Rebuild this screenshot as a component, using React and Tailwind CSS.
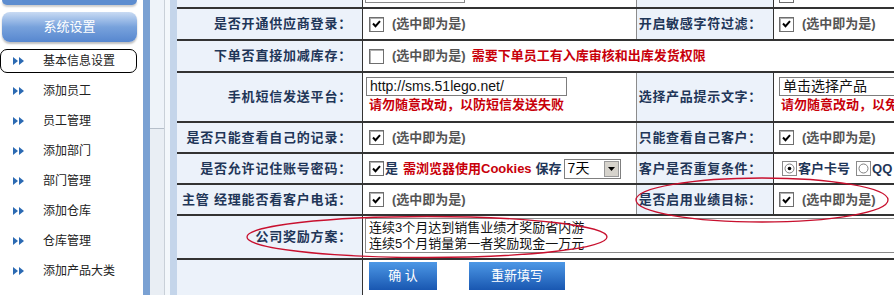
import React from "react";

const menu = ["基本信息设置", "添加员工", "员工管理", "添加部门", "部门管理", "添加仓库", "仓库管理", "添加产品大类"];

function Arrows() {
    return (
        <svg width="12" height="8" viewBox="0 0 12 8">
            <polygon points="0,0 5,4 0,8" fill="#2b6ab3" />
            <polygon points="6,0 11,4 6,8" fill="#2b6ab3" />
        </svg>
    );
}

function Sidebar() {
    return (
        <div className="flex w-[143px] shrink-0 flex-col bg-white">
            <div className="mx-[2px] h-[5px] w-[135px] rounded-b-[6px] bg-[#5d8dd0] shadow-[0_2px_2px_rgba(0,0,0,0.2)]" />
            <div className="mx-[2px] mt-[7px] flex h-[30px] w-[135px] items-center justify-center rounded-[8px] bg-linear-to-b from-[#c9dbf3] via-[#78a2dc] to-[#5787cf] text-[13px] text-white shadow-[0_2px_2px_rgba(0,0,0,0.25)]">
                系统设置
            </div>
            <div className="mt-[4px] flex flex-col">
                {menu.map((item, i) => (
                    <div key={item} className="h-[30px] py-[3px]">
                        <div className={i === 0
                            ? "flex h-full w-[137px] items-center rounded-[7px] border border-black pl-[12px]"
                            : "flex h-full w-[137px] items-center rounded-[7px] border border-transparent pl-[12px]"}>
                            <Arrows />
                            <span className="ml-[18px] text-[12px] text-[#222]">{item}</span>
                        </div>
                    </div>
                ))}
            </div>
        </div>
    );
}

function Check({ checked }) {
    return (
        <span className="inline-flex h-[15px] w-[15px] shrink-0 items-center justify-center border border-[#6e6e6e] bg-white shadow-[inset_1px_1px_0_#b0b0b0]">
            {checked && (
                <svg width="9" height="8" viewBox="0 0 9 8">
                    <path d="M1 3.5 L3.5 6.2 L8 1.2" stroke="#000" strokeWidth="2" fill="none" />
                </svg>
            )}
        </span>
    );
}

function Radio({ checked }) {
    return (
        <span className="inline-flex h-[15px] w-[15px] shrink-0 items-center justify-center border border-[#8a8a8a] bg-white">
            <svg width="11" height="11" viewBox="0 0 11 11">
                <circle cx="5.5" cy="5.5" r="4.5" fill="#fff" stroke="#808080" />
                {checked && <circle cx="5.5" cy="5.5" r="1.8" fill="#000" />}
            </svg>
        </span>
    );
}

function Hint() {
    return <span className="ml-[8px] text-[13px] font-bold text-[#555]">(选中即为是)</span>;
}

function Label({ children }) {
    return (
        <div className="flex w-[185px] shrink-0 items-center justify-end bg-[#ecf2fa] pr-[10px] text-[13px] font-bold tracking-[0.8px] whitespace-nowrap text-[#1f3658]">
            {children}
        </div>
    );
}

function Label2({ children }) {
    return (
        <div className="flex w-[137px] shrink-0 items-center justify-end border-l border-[#8c8c8c] bg-[#ecf2fa] pr-[11px] text-[13px] font-bold tracking-[0.7px] whitespace-nowrap text-[#1f3658]">
            {children}
        </div>
    );
}

function Value({ children }) {
    return (
        <div className="flex w-[274px] shrink-0 items-center border-l border-[#333] pl-[6px] whitespace-nowrap">
            {children}
        </div>
    );
}

function Value2({ children }) {
    return (
        <div className="flex min-w-0 flex-1 items-center overflow-hidden border-l border-[#333] pl-[5px] whitespace-nowrap">
            {children}
        </div>
    );
}

export default function App() {
    return (
        <div className="relative flex h-[295px] w-[894px] overflow-hidden bg-white font-['Liberation_Sans','Noto_Sans_CJK_SC',sans-serif]">
            <Sidebar />
            <div className="w-[7px] shrink-0 bg-[#7aa1d3]" />
            <div className="flex w-[15px] shrink-0 flex-col border-r border-[#c9d0d8] bg-[#eef3f9]">
                <div className="h-[129px] border-b border-[#b6bfca]" />
                <div className="flex-1 bg-[#e9eef4]" />
            </div>
            <div className="w-[5px] shrink-0 bg-[#f3f7fb]" />
            <div className="w-[7px] shrink-0 bg-[#c4d5ea]" />

            <div className="flex min-w-0 flex-1 flex-col">
                <div className="flex h-[7px] shrink-0">
                    <div className="w-[185px] shrink-0 bg-[#ecf2fa]" />
                    <div className="w-[274px] shrink-0 border-l border-[#333]">
                        <div className="ml-[2px] h-[3px] w-[100px] border-x border-b border-[#8a8a8a]" />
                    </div>
                    <div className="w-[137px] shrink-0 border-l border-[#8c8c8c] bg-[#ecf2fa]" />
                    <div className="flex-1 border-l border-[#333]">
                        <div className="ml-[5px] h-[3px] w-[15px] border-x border-b border-[#6e6e6e]" />
                    </div>
                </div>

                <div className="flex h-[32px] shrink-0 border-t-2 border-[#333]">
                    <Label>是否开通供应商登录：</Label>
                    <Value><Check checked /><Hint /></Value>
                    <Label2>开启敏感字符过滤：</Label2>
                    <Value2><Check checked /><Hint /></Value2>
                </div>

                <div className="flex h-[32px] shrink-0 border-t-2 border-[#333]">
                    <Label>下单否直接加减库存：</Label>
                    <div className="flex flex-1 items-center border-l border-[#333] pl-[6px] whitespace-nowrap">
                        <Check />
                        <Hint />
                        <span className="ml-[6px] text-[13px] font-bold text-[#c8000a]">需要下单员工有入库审核和出库发货权限</span>
                    </div>
                </div>

                <div className="flex h-[50px] shrink-0 border-t-2 border-[#333]">
                    <Label>手机短信发送平台：</Label>
                    <div className="flex w-[274px] shrink-0 flex-col border-l border-[#333] pt-[4px] pl-[3px] whitespace-nowrap">
                        <div className="flex h-[19px] w-[201px] items-center border border-[#7d7d7d] pl-[3px] text-[14px] text-[#111]">
                            http://sms.51lego.net/
                        </div>
                        <div className="mt-[1px] pl-[3px] text-[13px] leading-[16px] font-bold text-[#c8000a]">请勿随意改动，以防短信发送失败</div>
                    </div>
                    <Label2>选择产品提示文字：</Label2>
                    <div className="flex min-w-0 flex-1 flex-col overflow-hidden border-l border-[#333] pt-[4px] pl-[5px] whitespace-nowrap">
                        <div className="flex h-[19px] w-[200px] items-center border border-[#7d7d7d] pl-[3px] text-[14px] text-[#111]">
                            单击选择产品
                        </div>
                        <div className="mt-[1px] pl-[2px] text-[13px] leading-[16px] font-bold text-[#c8000a]">请勿随意改动，以免</div>
                    </div>
                </div>

                <div className="flex h-[31px] shrink-0 border-t-2 border-[#333]">
                    <Label>是否只能查看自己的记录：</Label>
                    <Value><Check checked /><Hint /></Value>
                    <Label2>只能查看自己客户：</Label2>
                    <Value2><Check checked /><Hint /></Value2>
                </div>

                <div className="flex h-[31px] shrink-0 border-t-2 border-[#333]">
                    <Label>是否允许记住账号密码：</Label>
                    <Value>
                        <Check checked />
                        <span className="ml-[1px] text-[13px] font-bold text-[#1f3658]">是</span>
                        <span className="ml-[5px] text-[13px] font-bold text-[#c8000a]">需浏览器使用Cookies</span>
                        <span className="ml-[4px] text-[13px] font-bold text-[#1f3658]">保存</span>
                        <span className="ml-[2px] flex h-[20px] w-[57px] items-center border border-[#7f7f7f] bg-white">
                            <span className="flex-1 pl-[3px] text-[14px] text-black">7天</span>
                            <span className="mr-[1px] flex h-[16px] w-[15px] items-center justify-center border border-[#9a9a9a] bg-[#d6d3cc]">
                                <svg width="7" height="4" viewBox="0 0 7 4"><polygon points="0,0 7,0 3.5,4" fill="#000" /></svg>
                            </span>
                        </span>
                    </Value>
                    <Label2>客户是否重复条件：</Label2>
                    <Value2>
                        <span className="ml-[3px] flex"><Radio checked /></span>
                        <span className="ml-[1px] text-[13px] font-bold text-[#1f3658]">客户卡号</span>
                        <span className="ml-[6px] flex"><Radio /></span>
                        <span className="ml-[1px] text-[13px] font-bold text-[#1f3658]">QQ</span>
                    </Value2>
                </div>

                <div className="flex h-[31px] shrink-0 border-t-2 border-[#333]">
                    <Label>主管 经理能否看客户电话：</Label>
                    <Value><Check checked /><Hint /></Value>
                    <Label2>是否启用业绩目标：</Label2>
                    <Value2><Check checked /><Hint /></Value2>
                </div>

                <div className="flex h-[44px] shrink-0 border-t-2 border-[#333]">
                    <Label>公司奖励方案：</Label>
                    <div className="flex-1 overflow-hidden border-l border-[#333] pt-[2px] pl-[2px]">
                        <textarea
                            readOnly
                            value={"连续3个月达到销售业绩才奖励省内游\n连续5个月销量第一者奖励现金一万元"}
                            className="block h-[35px] w-[560px] resize-none overflow-hidden border border-[#8a8a8a] px-[3px] py-[1px] text-[13px] leading-[16px] text-[#111] outline-none"
                        />
                    </div>
                </div>

                <div className="flex flex-1 border-t-2 border-[#333]">
                    <div className="w-[185px] shrink-0 bg-[#ecf2fa]" />
                    <div className="flex flex-1 items-start gap-[32px] border-l border-[#333] pt-[2px] pl-[6px]">
                        <button className="h-[28px] w-[68px] bg-linear-to-b from-[#4d98e6] to-[#1957b1] text-[13px] text-white">
                            确 认
                        </button>
                        <button className="h-[28px] w-[96px] bg-linear-to-b from-[#4d98e6] to-[#1957b1] text-[13px] text-white">
                            重新填写
                        </button>
                    </div>
                </div>
            </div>

            <svg className="pointer-events-none absolute top-0 left-0" width="894" height="295">
                <ellipse cx="762" cy="200" rx="126" ry="22" fill="none" stroke="#c8102e" strokeWidth="1.3" />
                <ellipse cx="427" cy="237" rx="180" ry="20.5" fill="none" stroke="#c8102e" strokeWidth="1.3" />
            </svg>
        </div>
    );
}
